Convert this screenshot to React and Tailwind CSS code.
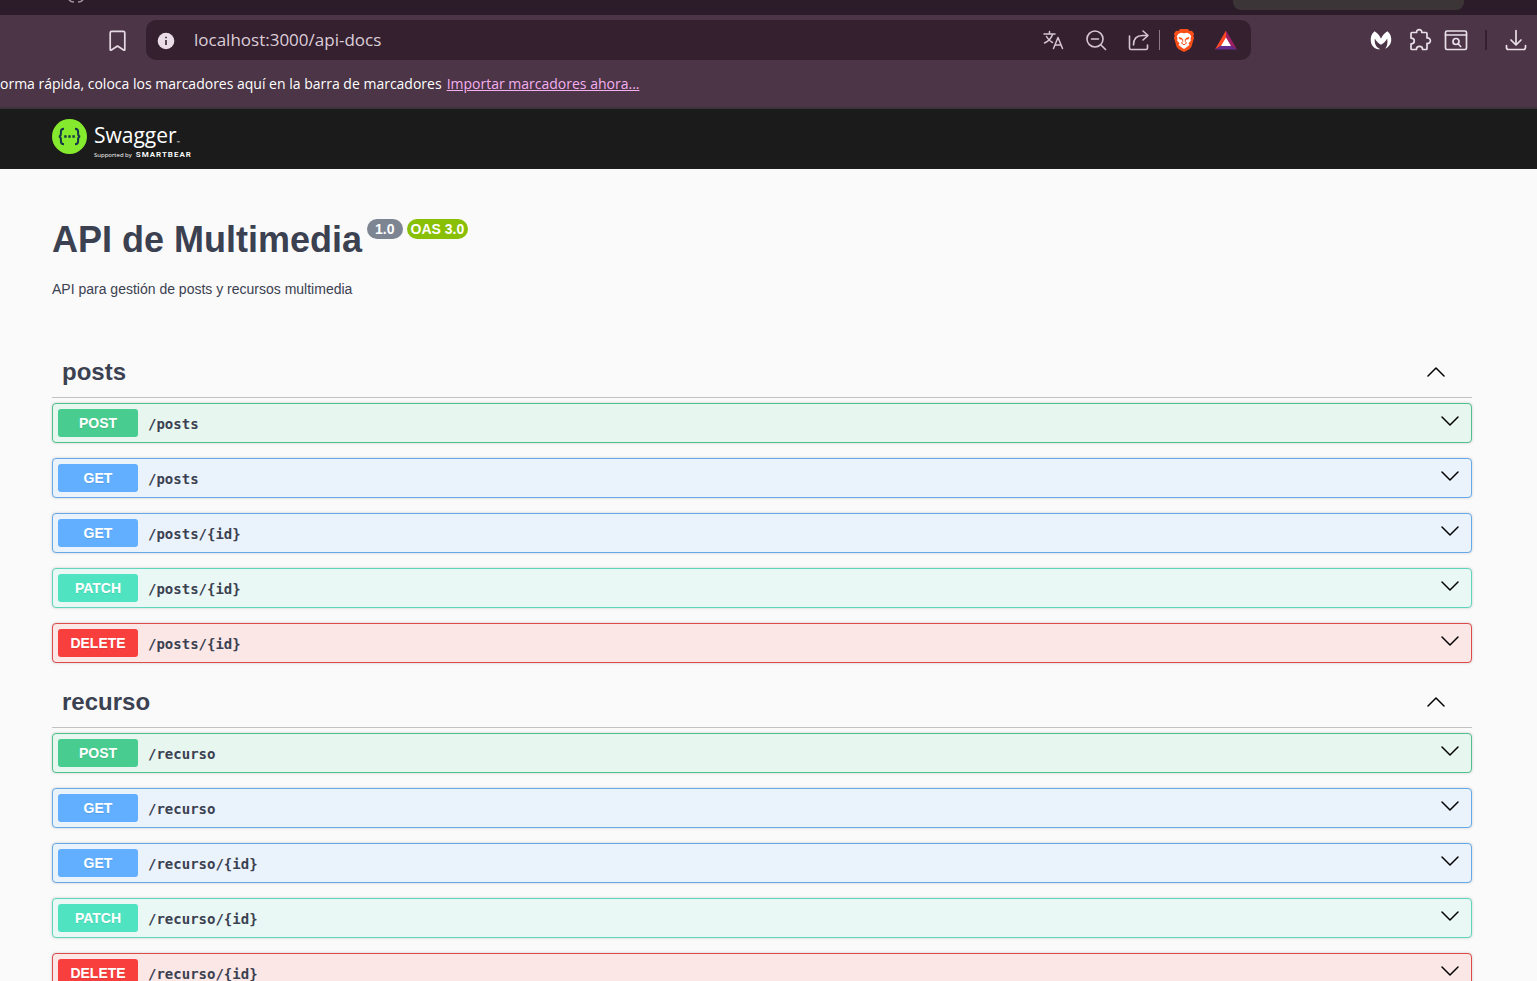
const METHODS = {
  POST: { row: 'border-[#50c18d] bg-[#e7f6ee]', badge: 'bg-[#49cc90]' },
  GET: { row: 'border-[#66a9e8] bg-[#eaf3fb]', badge: 'bg-[#61affe]' },
  PATCH: { row: 'border-[#5fd6bb] bg-[#e9f8f4]', badge: 'bg-[#50e3c2]' },
  DELETE: { row: 'border-[#dd4a4a] bg-[#fae7e6]', badge: 'bg-[#f93e3e]' },
};

const SECTIONS = [
  {
    name: 'posts',
    operations: [
      ['POST', '/posts'],
      ['GET', '/posts'],
      ['GET', '/posts/{id}'],
      ['PATCH', '/posts/{id}'],
      ['DELETE', '/posts/{id}'],
    ],
  },
  {
    name: 'recurso',
    operations: [
      ['POST', '/recurso'],
      ['GET', '/recurso'],
      ['GET', '/recurso/{id}'],
      ['PATCH', '/recurso/{id}'],
      ['DELETE', '/recurso/{id}'],
    ],
  },
];

function Icon({ children, className = 'size-6', width = 1.7 }) {
  return (
    <svg viewBox="0 0 24 24" fill="none" stroke="currentColor" strokeWidth={width} strokeLinecap="round" strokeLinejoin="round" className={className} aria-hidden="true">
      {children}
    </svg>
  );
}

function IconButton({ label, children, className = '' }) {
  return (
    <button type="button" aria-label={label} className={'flex size-6 shrink-0 items-center justify-center ' + className}>
      {children}
    </button>
  );
}

function Chevron({ up }) {
  return (
    <svg viewBox="0 0 20 20" className="size-5 shrink-0" fill="none" stroke="#000" strokeWidth="1.5" strokeLinecap="round" strokeLinejoin="round" aria-hidden="true">
      <path d={up ? 'M2 14l8-8 8 8' : 'M2 6l8 8 8-8'} />
    </svg>
  );
}

function BrowserChrome() {
  return (
    <div className="bg-[#4b3546] font-['Open_Sans','Noto_Sans',sans-serif] text-white">
      <div className="flex h-[15px] justify-between bg-[#2c1b29] pl-[68px] pr-[73px]">
        <svg viewBox="0 0 16 3" className="h-[3px] w-4" fill="none" stroke="#a497a2" strokeWidth="1.5" aria-hidden="true">
          <path d="M1 0c1 1 2 2 5 2M10 2c2 0 4-1 5-2" />
        </svg>
        <div className="h-[10px] w-[231px] rounded-b-lg bg-[#3c3538]" />
      </div>
      <div className="flex h-[50px] items-center pr-[9px]">
        <IconButton label="Marcador" className="ml-[105px] text-[#e6d9e3]">
          <Icon><path d="M5.200 21.500V4.800a1.500 1.500 0 0 1 1.500-1.500h11.600a1.500 1.500 0 0 1 1.500 1.500v16.700q0 1.200-1.200.5L12.500 18l-6.100 4q-1.200.7-1.200-.5z" /></Icon>
        </IconButton>
        <div className="ml-[17px] flex h-10 min-w-0 max-w-[1105px] flex-1 items-center rounded-[10px] bg-[#34202f] pl-2 pr-[13px] text-[#d8c5d3]">
          <IconButton label="Información del sitio">
            <svg viewBox="0 0 24 24" className="size-6" aria-hidden="true">
              <circle cx="12" cy="13" r="8.3" fill="#eadde7" />
              <path d="M12 12v5M12 8.700v1.600" stroke="#34202f" strokeWidth="1.6" />
            </svg>
          </IconButton>
          <input aria-label="Dirección" defaultValue="localhost:3000/api-docs" className="ml-4 min-w-0 flex-1 bg-transparent text-[17px] text-[#ddced9] outline-none" />
          <IconButton label="Traducir">
            <Icon width={1.5}><path d="M3 6h11M8.500 3.500v2.500M11.700 6c-1 3.500-4 7-8.200 9M5.500 8.500c1.500 3 3.500 4.700 6 6M12.500 20.500l4.500-11 4.500 11M14 17h6" /></Icon>
          </IconButton>
          <IconButton label="Zoom" className="ml-[19px]">
            <Icon width={1.6}><circle cx="11" cy="11" r="8" /><path d="M7.500 11h7M17 17l4.500 4.500" /></Icon>
          </IconButton>
          <IconButton label="Compartir" className="ml-[19px]">
            <Icon width={1.6}><path d="M2.500 8v12a1.500 1.500 0 0 0 1.500 1.500h15a1.500 1.500 0 0 0 1.500-1.500v-3M6.500 17c0-6 3-9.500 9-9.500h4.500M16 3l5 4.500-5 4.500" /></Icon>
          </IconButton>
          <span className="ml-2 h-5 w-px bg-[#8d7b88]" />
          <IconButton label="Brave Shields" className="ml-3">
            <svg viewBox="0 0 24 24" className="size-6" aria-hidden="true">
              <path d="M8.200 1h7.600l1.800 2 2.400-.3 2 3-.6 2L22 10l-2.600 8.800-2 2.400L12 24l-5.400-2.800-2-2.400L2 10l.6-2.300-.6-2 2-3L6.400 3z" fill="#fb4f1a" />
              <path d="M9 4.700l3 .6 3-.6 2.800 1.200 1.400 2.300-.7 2.300.3 2.200-2.300 2.600 1 1.600-1.500 1L14.300 17 16 18.300 12 21l-4-2.700L9.700 17 8 17.900l-1.500-1 1-1.600-2.300-2.600.3-2.200-.7-2.300 1.400-2.300z" fill="#fff" />
              <path d="M6.500 8.800l4 1.400-.8 1.600-2.200-.6zM17.500 8.800l-4 1.400.8 1.600 2.200-.6z" fill="#fb4f1a" />
              <path d="M10.700 11v2.500l-1.200 1.700 2.500 1.600 2.500-1.600-1.200-1.700V11" fill="none" stroke="#fb4f1a" strokeWidth="1" />
            </svg>
          </IconButton>
          <IconButton label="Brave Rewards" className="ml-[18px]">
            <svg viewBox="0 0 24 24" className="size-6" aria-hidden="true">
              <path d="M12 2.500L1 21.500l11-7z" fill="#ff4724" />
              <path d="M12 2.500l11 19-11-7z" fill="#9e1f63" />
              <path d="M1 21.500h22l-11-7z" fill="#662d91" />
              <path d="M12 9.500l5 8.500H7z" fill="#fff" />
            </svg>
          </IconButton>
        </div>
        <div className="ml-auto flex items-center pl-4 text-[#eadfe8]">
          <IconButton label="Malwarebytes">
            <svg viewBox="0 0 24 24" className="size-6" fill="#fff" aria-hidden="true">
              <path d="M5.500 3.200C8.500 5 10.800 7.600 12 10.800 13.200 7.600 15.500 5 18.500 3.200c2.800 2.300 4.200 6 3.700 9.700-.4 3.400-2.800 6.300-6 7.800 2-2.500 2.600-5.500 2-10.200-1.200 2.600-3.400 4.700-6.200 6.200-2.800-1.500-5-3.600-6.200-6.200-.5 5.300 1.200 8.800 5.700 10.800C6 21.700 2.300 18.200 1.800 12.900 1.300 9.200 2.700 5.500 5.500 3.200z" />
            </svg>
          </IconButton>
          <IconButton label="Extensiones" className="ml-[15px]">
            <Icon><path d="M4 4.500h4.600C8.400 2.600 9.700 1.700 11.200 1.700s2.800.9 2.600 2.800H18a1 1 0 0 1 1 1V10c2-.3 3.400 1 3.400 2.700S21 15.700 19 15.400V20.500a1 1 0 0 1-1 1h-3.400c0-2.200-1.400-3.200-3.100-3.200s-3.100 1-3.100 3.200H4a1 1 0 0 1-1-1v-4.600c2.200 0 3.300-1.300 3.300-2.900S5.200 10.100 3 10.100V5.500a1 1 0 0 1 1-1z" /></Icon>
          </IconButton>
          <IconButton label="Buscar en la página" className="ml-3">
            <Icon><rect x="1.500" y="3" width="21" height="18.500" rx="1.500" /><path d="M1.500 7h21M14.200 16l2.500 2.500" /><circle cx="12" cy="13.500" r="3" /></Icon>
          </IconButton>
          <span className="ml-[17px] h-5 w-[2px] bg-[#34202f]" />
          <IconButton label="Descargas" className="ml-[17px]">
            <Icon><path d="M12 2.500v14M7 12l5 5 5-5M2.500 17.500v2a2 2 0 0 0 2 2h15a2 2 0 0 0 2-2v-2" /></Icon>
          </IconButton>
        </div>
      </div>
      <div className="flex h-[44px] items-center border-b-2 border-[#3c3439] pb-1 text-sm whitespace-nowrap">
        <span>orma rápida, coloca los marcadores aquí en la barra de marcadores</span>
        <a href="#importar" className="ml-[5px] text-[#f5aef0] underline">Importar marcadores ahora...</a>
      </div>
    </div>
  );
}

function SwaggerHeader() {
  return (
    <header className="bg-[#1b1b1b] pl-[52px] pr-[65px] text-white">
      <a href="#inicio" className="flex h-[60px] w-fit items-start gap-[7px] pt-[10px]">
        <svg viewBox="0 0 35 35" className="size-[35px]" aria-hidden="true">
          <circle cx="17.500" cy="17.500" r="17.500" fill="#85ea2d" />
          <path d="M12 9.800c-2.600 0-3.100 1-3.100 3v1.700c0 1.800-.6 2.900-2.100 3 1.500.1 2.100 1.200 2.100 3v1.700c0 2 .5 3 3.100 3M23 9.800c2.600 0 3.100 1 3.100 3v1.700c0 1.800.6 2.900 2.100 3-1.500.1-2.100 1.200-2.100 3v1.700c0 2-.5 3-3.100 3" fill="none" stroke="#173647" strokeWidth="2" />
          <path d="M12.200 16.300h2.400v2.400h-2.400zM16.300 16.300h2.400v2.400h-2.400zM20.400 16.300h2.400v2.400h-2.400z" fill="#173647" />
        </svg>
        <span className="flex flex-col font-['Open_Sans',sans-serif]">
          <span className="flex h-[30px] items-center pt-0.5 text-[21px] leading-6">Swagger<span className="self-end text-[4px] leading-3">™</span></span>
          <span className="flex items-center gap-1 text-[6px] leading-[12px]">
            Supported by <b className="font-['Roboto',sans-serif] text-[8px] font-semibold tracking-[1px]">SMARTBEAR</b>
          </span>
        </span>
      </a>
    </header>
  );
}

function Operation({ method, path }) {
  const style = METHODS[method];
  return (
    <button type="button" className={'flex h-10 w-full items-center rounded-sm border pl-[5px] pr-[11px] text-left shadow-[0_0_3px_rgba(0,0,0,0.19)] ' + style.row}>
      <span className={'flex h-7 w-20 items-center justify-center rounded-[3px] text-sm font-bold text-white [text-shadow:0_1px_0_rgba(0,0,0,0.1)] ' + style.badge}>{method}</span>
      <span className="flex-1 pt-0.5 pl-[10px] font-['DejaVu_Sans_Mono',monospace] text-sm font-bold">{path}</span>
      <span className="pb-1"><Chevron /></span>
    </button>
  );
}

export default function App() {
  return (
    <div className="min-h-screen bg-[#fafafa] font-['Liberation_Sans',Arial,sans-serif] text-[#3b4151]">
      <BrowserChrome />
      <SwaggerHeader />
      <main className="pl-[52px] pr-[65px]">
        <div className="pt-[50px]">
          <div className="flex items-start gap-[5px]">
            <h1 className="text-4xl leading-[42px] font-bold">API de Multimedia</h1>
            <div className="flex gap-1 text-sm leading-5 font-bold text-white">
              <span className="rounded-full bg-[#7d8492] px-2">1.0</span>
              <span className="rounded-full bg-[#89bf04] px-1">OAS 3.0</span>
            </div>
          </div>
          <p className="mt-[18px] text-sm">API para gestión de posts y recursos multimedia</p>
        </div>
        <div className="mt-11">
          {SECTIONS.map((section) => (
            <section key={section.name} className="mb-[10px]">
              <h2 className="border-b border-[#3b4151]/30 text-2xl leading-[30px] font-bold">
                <button type="button" aria-expanded="true" className="flex h-[54px] w-full items-center justify-between pt-1 pl-[10px] pr-[26px]">
                  {section.name}
                  <Chevron up />
                </button>
              </h2>
              <div className="mt-[5px] flex flex-col gap-[15px]">
                {section.operations.map(([method, path]) => (
                  <Operation key={method + path} method={method} path={path} />
                ))}
              </div>
            </section>
          ))}
        </div>
      </main>
    </div>
  );
}
